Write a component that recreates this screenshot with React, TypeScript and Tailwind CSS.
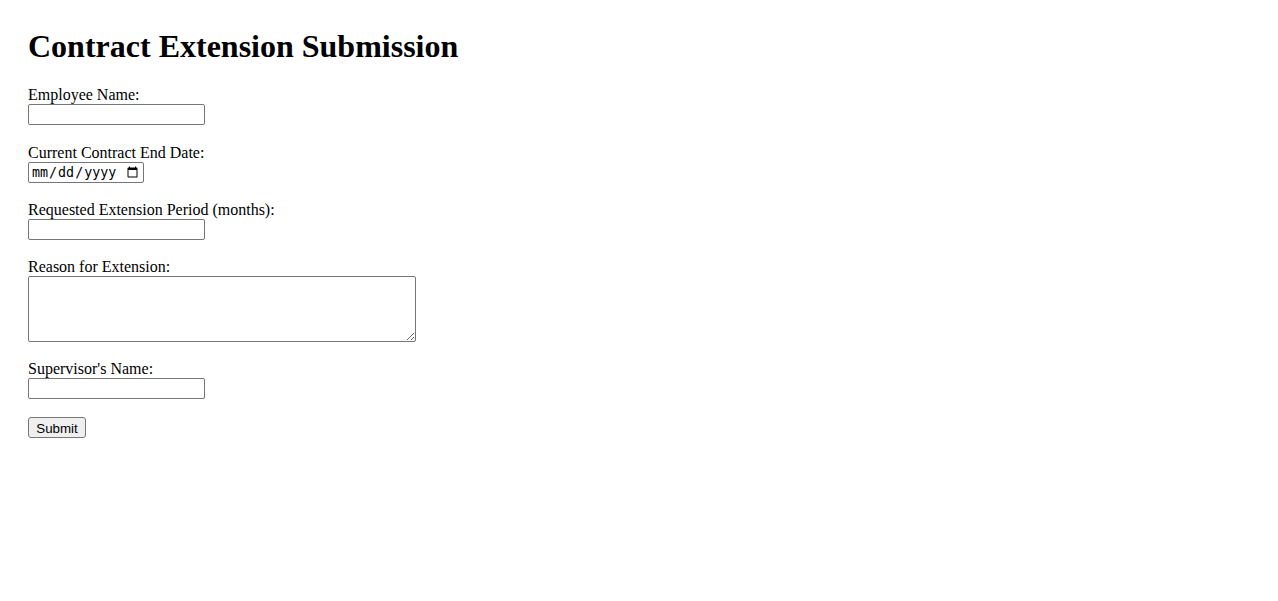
import React from 'react';

const fieldClass =
  "block w-[177px] h-[21px] px-[2px] py-[1px] border border-[#767676] rounded-[2px] bg-white text-[13.33px] text-black font-['Liberation_Sans',Arial,sans-serif]";

function Field({ label, gap = 'mb-[18px]', children }: { label: string; gap?: string; children: React.ReactNode }) {
  return (
    <div className={gap}>
      <label className="block text-[16px] leading-[18px]">{label}</label>
      {children}
    </div>
  );
}

export default function App() {
  return (
    <div className="min-h-screen bg-white text-black font-['Liberation_Serif','Times_New_Roman',serif] pt-[28px] px-[28px]">
      <h1 className="text-[32px] font-bold leading-[37px] mb-[21px]">Contract Extension Submission</h1>
      <form onSubmit={(e) => e.preventDefault()}>
        <Field label="Employee Name:" gap="mb-[19px]">
          <input type="text" className={fieldClass} />
        </Field>
        <Field label="Current Contract End Date:">
          <input
            type="date"
            className="block w-[116px] h-[21px] px-[2px] py-[1px] border border-[#767676] rounded-[2px] bg-white text-[13.33px] text-black font-['DejaVu_Sans_Mono',monospace]"
          />
        </Field>
        <Field label="Requested Extension Period (months):">
          <input type="number" className={fieldClass} />
        </Field>
        <Field label="Reason for Extension:">
          <textarea className="block w-[388px] h-[66px] px-[2px] py-[2px] border border-[#767676] rounded-[2px] bg-white text-[13.33px] font-['DejaVu_Sans_Mono',monospace]" />
        </Field>
        <Field label="Supervisor's Name:">
          <input type="text" className={fieldClass} />
        </Field>
        <button
          type="submit"
          className="block w-[58px] h-[21px] px-[6px] py-[1px] border border-[#767676] rounded-[3px] bg-[#efefef] text-[13.33px] text-black font-['Liberation_Sans',Arial,sans-serif]"
        >
          Submit
        </button>
      </form>
    </div>
  );
}
